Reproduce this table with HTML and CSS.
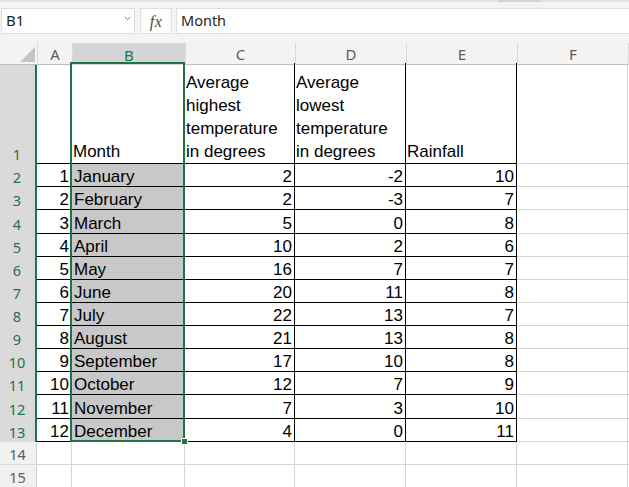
FILE: index.html
```html
<!DOCTYPE html>
<html>
<head>
<meta charset="utf-8">
<link rel="stylesheet" href="styles.css">
</head>
<body>
<div class="app">
  <div class="topstrip"><div class="thumb"></div></div>
  <div class="formula-bar">
    <div class="namebox"><span>B1</span>
      <svg class="chev" width="7" height="5" viewBox="0 0 7 5"><path d="M0.8 1 L3.5 3.7 L6.2 1" fill="none" stroke="#7a7a7a" stroke-width="1"/></svg>
    </div>
    <div class="fxbox"><span>fx</span></div>
    <div class="formula">Month</div>
  </div>
  <div class="sheet">
    <div class="row hdr">
      <div class="corner"><div class="tri"></div></div>
      <div class="ch">A</div>
      <div class="ch selcol">B</div>
      <div class="ch">C</div>
      <div class="ch">D</div>
      <div class="ch">E</div>
      <div class="ch">F</div>
      <div class="ch last"></div>
    </div>

    <div class="row r1">
      <div class="rh sel">1</div>
      <div class="c b"></div>
      <div class="c b">Month</div>
      <div class="c b">Average highest temperature in degrees</div>
      <div class="c b">Average lowest temperature in degrees</div>
      <div class="c b">Rainfall</div>
      <div class="c g"></div>
      <div class="c g last"></div>
    </div>

    <div class="row rn">
      <div class="rh sel">2</div>
      <div class="c b n">1</div><div class="c b s">January</div><div class="c b n">2</div><div class="c b n">-2</div><div class="c b n">10</div><div class="c g"></div><div class="c g last"></div>
    </div>
    <div class="row rn">
      <div class="rh sel">3</div>
      <div class="c b n">2</div><div class="c b s">February</div><div class="c b n">2</div><div class="c b n">-3</div><div class="c b n">7</div><div class="c g"></div><div class="c g last"></div>
    </div>
    <div class="row rn tall">
      <div class="rh sel">4</div>
      <div class="c b n">3</div><div class="c b s">March</div><div class="c b n">5</div><div class="c b n">0</div><div class="c b n">8</div><div class="c g"></div><div class="c g last"></div>
    </div>
    <div class="row rn">
      <div class="rh sel">5</div>
      <div class="c b n">4</div><div class="c b s">April</div><div class="c b n">10</div><div class="c b n">2</div><div class="c b n">6</div><div class="c g"></div><div class="c g last"></div>
    </div>
    <div class="row rn">
      <div class="rh sel">6</div>
      <div class="c b n">5</div><div class="c b s">May</div><div class="c b n">16</div><div class="c b n">7</div><div class="c b n">7</div><div class="c g"></div><div class="c g last"></div>
    </div>
    <div class="row rn">
      <div class="rh sel">7</div>
      <div class="c b n">6</div><div class="c b s">June</div><div class="c b n">20</div><div class="c b n">11</div><div class="c b n">8</div><div class="c g"></div><div class="c g last"></div>
    </div>
    <div class="row rn">
      <div class="rh sel">8</div>
      <div class="c b n">7</div><div class="c b s">July</div><div class="c b n">22</div><div class="c b n">13</div><div class="c b n">7</div><div class="c g"></div><div class="c g last"></div>
    </div>
    <div class="row rn">
      <div class="rh sel">9</div>
      <div class="c b n">8</div><div class="c b s">August</div><div class="c b n">21</div><div class="c b n">13</div><div class="c b n">8</div><div class="c g"></div><div class="c g last"></div>
    </div>
    <div class="row rn">
      <div class="rh sel">10</div>
      <div class="c b n">9</div><div class="c b s">September</div><div class="c b n">17</div><div class="c b n">10</div><div class="c b n">8</div><div class="c g"></div><div class="c g last"></div>
    </div>
    <div class="row rn">
      <div class="rh sel">11</div>
      <div class="c b n">10</div><div class="c b s">October</div><div class="c b n">12</div><div class="c b n">7</div><div class="c b n">9</div><div class="c g"></div><div class="c g last"></div>
    </div>
    <div class="row rn tall">
      <div class="rh sel">12</div>
      <div class="c b n">11</div><div class="c b s">November</div><div class="c b n">7</div><div class="c b n">3</div><div class="c b n">10</div><div class="c g"></div><div class="c g last"></div>
    </div>
    <div class="row rn">
      <div class="rh sel">13</div>
      <div class="c b n">12</div><div class="c b s">December</div><div class="c b n">4</div><div class="c b n">0</div><div class="c b n">11</div><div class="c g"></div><div class="c g last"></div>
    </div>
    <div class="row rn">
      <div class="rh">14</div>
      <div class="c g"></div><div class="c g"></div><div class="c g"></div><div class="c g"></div><div class="c g"></div><div class="c g"></div><div class="c g last"></div>
    </div>
    <div class="row rn">
      <div class="rh">15</div>
      <div class="c g"></div><div class="c g"></div><div class="c g"></div><div class="c g"></div><div class="c g"></div><div class="c g"></div><div class="c g last"></div>
    </div>

    <div class="selection"><div class="handle"></div></div>
  </div>
</div>
</body>
</html>
```

FILE: styles.css
```css
* { box-sizing: border-box; }
html, body { margin: 0; padding: 0; background: #fff; }
body { width: 629px; height: 487px; overflow: hidden; }

.app { width: 629px; }

.topstrip {
  height: 2px;
  background: #e4e4e4;
  position: relative;
}
.thumb {
  position: absolute;
  left: 498px;
  width: 43px;
  top: 0;
  height: 2px;
  background: #d3d3d3;
}

.formula-bar {
  height: 41px;
  background: #f3f3f3;
  display: flex;
  align-items: flex-start;
  padding: 6px 0 0 1px;
  gap: 5px;
  font-family: "Noto Sans", sans-serif;
  font-size: 14.5px;
  color: #262626;
}
.namebox {
  width: 134px;
  height: 26px;
  background: #fff;
  border: 1px solid #dedede;
  display: flex;
  align-items: center;
  justify-content: space-between;
  padding: 0 3px 3px 4px;
}
.namebox span { line-height: 20px; font-size: 15px; }
.chev { margin-bottom: 2px; }
.fxbox {
  width: 32px;
  height: 26px;
  background: #fff;
  border: 1px solid #dedede;
  display: flex;
  align-items: center;
  justify-content: center;
}
.fxbox span {
  font-family: "Liberation Serif", serif;
  font-style: italic;
  font-size: 16px;
  color: #4a4a4a;
  letter-spacing: 0.5px;
  padding-top: 1px;
}
.formula {
  flex: 1;
  height: 26px;
  background: #fff;
  border: 1px solid #dedede;
  border-right: none;
  margin-left: -1px;
  padding: 0 4px;
  line-height: 23px;
}

.sheet {
  position: relative;
}

.row {
  display: grid;
  grid-template-columns: 37px 35px 113px 110px 111px 111px 111px 1fr;
}
.hdr { height: 20px; }
.r1 { height: 101px; }
.rn { height: 23px; }
.rn.tall { height: 24px; }

.corner {
  background: #f3f3f3;
  border-bottom: 1px solid #bdbdbd;
  position: relative;
}
.tri {
  position: absolute;
  right: 2px;
  bottom: 2px;
  width: 0;
  height: 0;
  border-left: 15px solid transparent;
  border-bottom: 15px solid #c4c4c4;
}
.ch {
  background: #f3f3f3;
  border-left: 1px solid #dadada;
  border-bottom: 1px solid #bdbdbd;
  font-family: "Noto Sans", sans-serif;
  font-size: 15px;
  color: #5c5c5c;
  display: flex;
  align-items: center;
  justify-content: center;
  padding-top: 1px;
}
.ch.selcol {
  background: #d5d5d5;
  color: #217346;
  border-bottom: none;
}
.ch.last { border-left: 1px solid #dadada; }

.rh {
  background: #f1f1f1;
  border-right: 1px solid #d0d0d0;
  border-bottom: 1px solid #dcdcdc;
  font-family: "Noto Sans", sans-serif;
  font-size: 14.5px;
  color: #5c5c5c;
  display: flex;
  align-items: flex-end;
  justify-content: center;
  line-height: 20px;
  padding-right: 1px;
}
.rh.sel {
  background: #dadada;
  color: #217346;
  border-right: 2px solid #217346;
  border-bottom: none;
}

.c {
  font-family: "Liberation Sans", Arial, sans-serif;
  font-size: 17px;
  color: #000;
  display: flex;
  align-items: flex-end;
  padding: 0 2px 0 2px;
  line-height: 19px;
  white-space: nowrap;
  overflow: hidden;
}
.r1 .c {
  white-space: normal;
  line-height: 23px;
  padding-left: 1px;
  padding-bottom: 0;
}
.c.b {
  border-right: 1px solid #000;
  border-bottom: 1px solid #000;
}
.c.g {
  border-right: 1px solid #d4d4d4;
  border-bottom: 1px solid #d4d4d4;
}
.c.last { border-right: none; }
.c.n { justify-content: flex-end; }
.c.s { background: #c8c8c8; }

.selection {
  position: absolute;
  left: 70px;
  top: 19px;
  width: 115px;
  height: 380px;
  border: 2px solid #217346;
}
.handle {
  position: absolute;
  right: -5px;
  bottom: -5px;
  width: 7px;
  height: 7px;
  background: #217346;
  border: 1px solid #fff;
}
```
